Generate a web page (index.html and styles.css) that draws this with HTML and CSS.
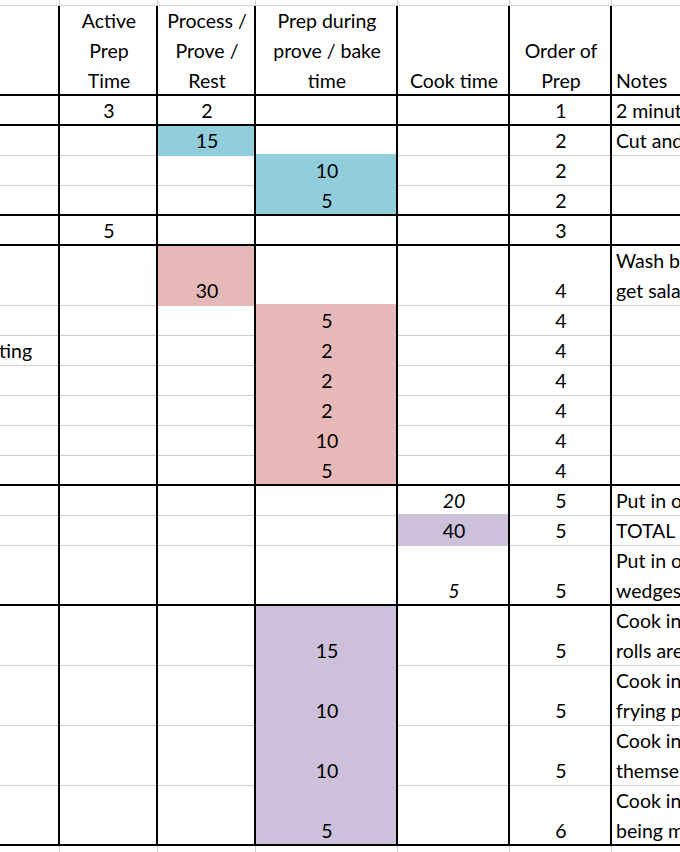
FILE: index.html
```html
<!DOCTYPE html>
<html lang="en">
<head>
<meta charset="utf-8">
<title>Prep schedule</title>
<link rel="stylesheet" href="styles.css">
</head>
<body>
<div class="sheet">
  <div class="grid">
    <div class="row top">
      <div class="c"></div><div class="c"></div><div class="c"></div><div class="c"></div><div class="c"></div><div class="c"></div><div class="c"></div>
    </div>
    <div class="row thick">
      <div class="c"></div>
      <div class="c"><span>Active<br>Prep<br>Time</span></div>
      <div class="c"><span>Process /<br>Prove /<br>Rest</span></div>
      <div class="c"><span>Prep during<br>prove / bake<br>time</span></div>
      <div class="c"><span>Cook time</span></div>
      <div class="c"><span>Order of<br>Prep</span></div>
      <div class="c note"><span>Notes</span></div>
    </div>
    <div class="row thick">
      <div class="c"></div><div class="c">3</div><div class="c">2</div><div class="c"></div><div class="c"></div><div class="c">1</div><div class="c note">2 minutes in the microwave</div>
    </div>
    <div class="row">
      <div class="c"></div><div class="c"></div><div class="c fill blue">15</div><div class="c"></div><div class="c"></div><div class="c">2</div><div class="c note">Cut and shape the rolls</div>
    </div>
    <div class="row">
      <div class="c"></div><div class="c"></div><div class="c"></div><div class="c fill blue up">10</div><div class="c"></div><div class="c">2</div><div class="c note"></div>
    </div>
    <div class="row thick">
      <div class="c"></div><div class="c"></div><div class="c"></div><div class="c fill blue">5</div><div class="c"></div><div class="c">2</div><div class="c note"></div>
    </div>
    <div class="row thick">
      <div class="c"></div><div class="c">5</div><div class="c"></div><div class="c"></div><div class="c"></div><div class="c">3</div><div class="c note"></div>
    </div>
    <div class="row">
      <div class="c"></div><div class="c"></div><div class="c fill pink">30</div><div class="c"></div><div class="c"></div><div class="c">4</div><div class="c note"><span>Wash baby potatoes and<br>get salad ready</span></div>
    </div>
    <div class="row">
      <div class="c"></div><div class="c"></div><div class="c"></div><div class="c fill pink up">5</div><div class="c"></div><div class="c">4</div><div class="c note"></div>
    </div>
    <div class="row">
      <div class="c spill"><span>ting</span></div><div class="c"></div><div class="c"></div><div class="c fill pink">2</div><div class="c"></div><div class="c">4</div><div class="c note"></div>
    </div>
    <div class="row">
      <div class="c"></div><div class="c"></div><div class="c"></div><div class="c fill pink">2</div><div class="c"></div><div class="c">4</div><div class="c note"></div>
    </div>
    <div class="row">
      <div class="c"></div><div class="c"></div><div class="c"></div><div class="c fill pink">2</div><div class="c"></div><div class="c">4</div><div class="c note"></div>
    </div>
    <div class="row">
      <div class="c"></div><div class="c"></div><div class="c"></div><div class="c fill pink">10</div><div class="c"></div><div class="c">4</div><div class="c note"></div>
    </div>
    <div class="row thick">
      <div class="c"></div><div class="c"></div><div class="c"></div><div class="c fill pink">5</div><div class="c"></div><div class="c">4</div><div class="c note"></div>
    </div>
    <div class="row">
      <div class="c"></div><div class="c"></div><div class="c"></div><div class="c"></div><div class="c it">20</div><div class="c">5</div><div class="c note">Put in oven</div>
    </div>
    <div class="row">
      <div class="c"></div><div class="c"></div><div class="c"></div><div class="c"></div><div class="c fill purple up">40</div><div class="c">5</div><div class="c note">TOTAL</div>
    </div>
    <div class="row thick">
      <div class="c"></div><div class="c"></div><div class="c"></div><div class="c"></div><div class="c it">5</div><div class="c">5</div><div class="c note"><span>Put in oven with the<br>wedges</span></div>
    </div>
    <div class="row">
      <div class="c"></div><div class="c"></div><div class="c"></div><div class="c fill purple">15</div><div class="c"></div><div class="c">5</div><div class="c note"><span>Cook in oven while the<br>rolls are baking</span></div>
    </div>
    <div class="row">
      <div class="c"></div><div class="c"></div><div class="c"></div><div class="c fill purple">10</div><div class="c"></div><div class="c">5</div><div class="c note"><span>Cook in a large<br>frying pan</span></div>
    </div>
    <div class="row">
      <div class="c"></div><div class="c"></div><div class="c"></div><div class="c fill purple">10</div><div class="c"></div><div class="c">5</div><div class="c note"><span>Cook in their own juices<br>themselves</span></div>
    </div>
    <div class="row thick">
      <div class="c"></div><div class="c"></div><div class="c"></div><div class="c fill purple">5</div><div class="c"></div><div class="c">6</div><div class="c note"><span>Cook in the pan while<br>being made</span></div>
    </div>
    <div class="row bottom">
      <div class="c"></div><div class="c"></div><div class="c"></div><div class="c"></div><div class="c"></div><div class="c"></div><div class="c"></div>
    </div>
  </div>
</div>
</body>
</html>
```
FILE: styles.css
```css
:root {
  --grid: #cfcfcf;
  --line: #000000;
}

html, body {
  margin: 0;
  padding: 0;
  background: #ffffff;
}

body {
  overflow: hidden;
  font-family: Lato, "Open Sans", "Liberation Sans", sans-serif;
  font-size: 19.5px;
  color: #000000;
}

.sheet {
  width: 680px;
  height: 852px;
  overflow: hidden;
}

.grid {
  display: grid;
  grid-template-columns: 60px 98px 98px 142px 112px 102px 340px;
  grid-template-rows: 6px 90px repeat(5, 30px) 60px repeat(8, 30px) repeat(5, 60px) 12px;
}

.row {
  display: contents;
}

.c {
  display: flex;
  align-items: flex-end;
  justify-content: center;
  text-align: center;
  line-height: 30px;
  white-space: nowrap;
  overflow: hidden;
  box-shadow: inset -2px 0 0 var(--line), inset 0 -1px 0 var(--grid);
}

.c.fill {
  position: relative;
  overflow: visible;
  box-shadow: inset -2px 0 0 var(--line);
}

.row.thick > .c {
  box-shadow: inset -2px 0 0 var(--line), inset 0 -2px 0 var(--line);
}

.row.top > .c {
  box-shadow: inset -1px 0 0 var(--grid), inset 0 -1px 0 var(--grid);
}

.row.bottom > .c {
  box-shadow: inset -1px 0 0 var(--grid);
}

.blue { background: #92cddc; }
.pink { background: #e6b8b7; }
.purple { background: #ccc0da; }

.c.up::before {
  content: "";
  position: absolute;
  left: 0;
  right: 2px;
  top: -2px;
  height: 2px;
  background: inherit;
}

.it {
  font-style: italic;
}

.note {
  justify-content: flex-start;
  text-align: left;
  padding-left: 4px;
}

.spill {
  justify-content: flex-start;
  text-align: left;
}

.spill span {
  margin-left: -1px;
}
```
